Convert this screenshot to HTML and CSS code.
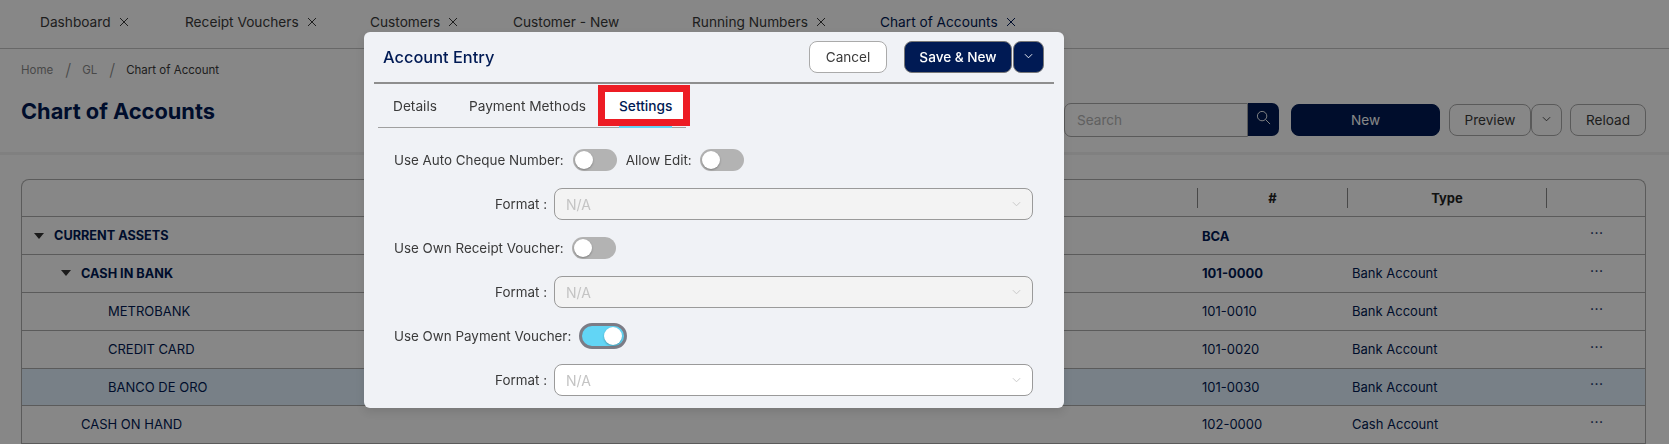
FILE: index.html
```html
<!DOCTYPE html>
<html lang="en">
<head>
    <meta charset="UTF-8">
    <meta name="viewport" content="width=device-width, initial-scale=1.0">
    <title>Chart of Accounts</title>
    <link rel="stylesheet" href="styles.css">
</head>
<body>
    <!-- Open tabs -->
    <nav class="topbar">
        <div class="page-tab tab-dashboard">Dashboard <svg class="close-icon" viewBox="0 0 10 10"><path d="M1 1l8 8M9 1l-8 8"/></svg></div>
        <div class="page-tab tab-receipts">Receipt Vouchers <svg class="close-icon" viewBox="0 0 10 10"><path d="M1 1l8 8M9 1l-8 8"/></svg></div>
        <div class="page-tab tab-customers">Customers <svg class="close-icon" viewBox="0 0 10 10"><path d="M1 1l8 8M9 1l-8 8"/></svg></div>
        <div class="page-tab tab-new">Customer - New</div>
        <div class="page-tab tab-numbers">Running Numbers <svg class="close-icon" viewBox="0 0 10 10"><path d="M1 1l8 8M9 1l-8 8"/></svg></div>
        <div class="page-tab tab-chart">Chart of Accounts <svg class="close-icon" viewBox="0 0 10 10"><path d="M1 1l8 8M9 1l-8 8"/></svg></div>
    </nav>

    <div class="crumbs">
        <span class="crumb-muted">Home</span>
        <span class="crumb-sep">/</span>
        <span class="crumb-muted">GL</span>
        <span class="crumb-sep">/</span>
        <span>Chart of Account</span>
    </div>

    <header class="page-head">
        <h1>Chart of Accounts</h1>
        <div class="actions">
            <div class="search">
                <input type="text" placeholder="Search">
                <button class="search-btn">
                    <svg viewBox="0 0 16 16"><circle cx="6.5" cy="6.5" r="5"/><path d="M10.2 10.2L15 15"/></svg>
                </button>
            </div>
            <button class="btn btn-new">New</button>
            <button class="btn btn-preview">Preview</button>
            <button class="btn btn-more">
                <svg class="chevron" viewBox="0 0 10 6"><path d="M1 1l4 4 4-4"/></svg>
            </button>
            <button class="btn btn-reload">Reload</button>
        </div>
    </header>

    <!-- Accounts list -->
    <section class="grid">
        <div class="row row-head">
            <div class="cell-name"></div>
            <div class="cell-code">#</div>
            <div class="cell-type">Type</div>
            <div class="cell-menu"></div>
        </div>
        <div class="row row-bold row-first">
            <div class="cell-name"><span class="caret"></span>CURRENT ASSETS</div>
            <div class="cell-code">BCA</div>
            <div class="cell-type"></div>
            <div class="cell-menu">···</div>
        </div>
        <div class="row row-bold">
            <div class="cell-name indent-1"><span class="caret"></span>CASH IN BANK</div>
            <div class="cell-code">101-0000</div>
            <div class="cell-type">Bank Account</div>
            <div class="cell-menu">···</div>
        </div>
        <div class="row">
            <div class="cell-name indent-2">METROBANK</div>
            <div class="cell-code">101-0010</div>
            <div class="cell-type">Bank Account</div>
            <div class="cell-menu">···</div>
        </div>
        <div class="row">
            <div class="cell-name indent-2">CREDIT CARD</div>
            <div class="cell-code">101-0020</div>
            <div class="cell-type">Bank Account</div>
            <div class="cell-menu">···</div>
        </div>
        <div class="row row-selected">
            <div class="cell-name indent-2">BANCO DE ORO</div>
            <div class="cell-code">101-0030</div>
            <div class="cell-type">Bank Account</div>
            <div class="cell-menu">···</div>
        </div>
        <div class="row">
            <div class="cell-name indent-3">CASH ON HAND</div>
            <div class="cell-code">102-0000</div>
            <div class="cell-type">Cash Account</div>
            <div class="cell-menu">···</div>
        </div>
    </section>

    <div class="backdrop"></div>

    <!-- Account Entry dialog -->
    <div class="modal">
        <div class="modal-head">
            <h2>Account Entry</h2>
            <button class="btn btn-cancel">Cancel</button>
            <button class="btn btn-save">Save &amp; New</button>
            <button class="btn btn-save-more">
                <svg class="chevron" viewBox="0 0 10 6"><path d="M1 1l4 4 4-4"/></svg>
            </button>
        </div>

        <div class="modal-tabs">
            <div class="modal-tab tab-details">Details</div>
            <div class="modal-tab tab-methods">Payment Methods</div>
            <div class="modal-tab tab-settings">Settings</div>
        </div>

        <form class="settings-form">
            <div class="switch-row">
                <label>Use Auto Cheque Number:</label>
                <span class="switch switch-first"></span>
                <label>Allow Edit:</label>
                <span class="switch"></span>
            </div>
            <div class="format-row">
                <label>Format :</label>
                <div class="select select-disabled">N/A <svg class="chevron" viewBox="0 0 10 6"><path d="M1 1l4 4 4-4"/></svg></div>
            </div>
            <div class="switch-row">
                <label>Use Own Receipt Voucher:</label>
                <span class="switch"></span>
            </div>
            <div class="format-row">
                <label>Format :</label>
                <div class="select select-disabled">N/A <svg class="chevron" viewBox="0 0 10 6"><path d="M1 1l4 4 4-4"/></svg></div>
            </div>
            <div class="switch-row switch-row-on">
                <label>Use Own Payment Voucher:</label>
                <span class="switch switch-on"></span>
            </div>
            <div class="format-row">
                <label>Format :</label>
                <div class="select">N/A <svg class="chevron" viewBox="0 0 10 6"><path d="M1 1l4 4 4-4"/></svg></div>
            </div>
        </form>
    </div>
</body>
</html>
```

FILE: styles.css
```css
* {
    box-sizing: border-box;
}
html, body {
    height: 444px;
    overflow: hidden;
}
body {
    font-family: Inter, "Noto Sans", sans-serif;
    font-size: 13px;
    color: #3a3a3a;
    background-color: white;
    margin: 0;
    padding: 0;
}
button {
    font-family: inherit;
    font-size: 13.6px;
}
svg {
    fill: none;
    stroke: currentColor;
}

/* top tabs */
.topbar {
    display: flex;
    height: 49px;
    padding: 0 0 4px 40px;
    border-bottom: 1px solid #c4c4c4;
    align-items: center;
}
.page-tab {
    display: flex;
    align-items: center;
    font-size: 13.7px;
    white-space: nowrap;
}
.tab-dashboard { width: 145px; }
.tab-receipts { width: 185px; }
.tab-customers { width: 143px; }
.tab-new { width: 179px; }
.tab-numbers { width: 188px; }
.tab-chart { color: #001a54; }
.close-icon {
    width: 10px;
    height: 10px;
    margin-left: 8px;
    stroke-width: 1;
}

/* breadcrumb */
.crumbs {
    display: flex;
    height: 49px;
    padding: 12px 0 0 21px;
    font-size: 11.5px;
    line-height: 18px;
}
.crumb-muted {
    color: #8a8a8a;
}
.crumb-sep {
    margin: 0 11px 0 12px;
    font-size: 17px;
    font-weight: 300;
    color: #8a8a8a;
}

/* page heading */
.page-head {
    display: flex;
    justify-content: space-between;
    height: 57px;
    padding: 0 23px 0 21px;
    border-bottom: 3px solid #f2f2f2;
}
h1 {
    margin: 0;
    font-size: 21.8px;
    line-height: 26px;
    font-weight: 700;
    color: #001a54;
}
.actions {
    display: flex;
    margin-top: 5px;
    height: 34px;
}
.search {
    display: flex;
    margin-right: 12px;
}
.search input {
    width: 184px;
    height: 34px;
    padding: 0 12px;
    font-family: inherit;
    font-size: 13.6px;
    border: 1px solid #aaa;
    border-radius: 7px 0 0 7px;
    background-color: white;
}
.search input::placeholder {
    color: #b5b5b5;
}
.search-btn {
    display: flex;
    align-items: center;
    justify-content: center;
    width: 31px;
    height: 33px;
    padding: 0 0 4px;
    color: white;
    background-color: #001a54;
    border: none;
    border-radius: 0 7px 7px 0;
}
.search-btn svg {
    width: 15px;
    height: 15px;
    stroke-width: 1;
}
.btn {
    display: flex;
    align-items: center;
    justify-content: center;
    height: 32px;
    padding: 0;
    margin-top: 1px;
    color: #3a3a3a;
    background-color: white;
    border: 1px solid #aaa;
    border-radius: 8px;
}
.chevron {
    width: 9px;
    height: 6px;
    stroke-width: 1;
}
.btn .chevron {
    margin-bottom: 3px;
}
.btn-new {
    width: 149px;
    margin-right: 9px;
    color: white;
    background-color: #001a54;
    border-color: #001a54;
}
.btn-preview { width: 82px; }
.btn-more { width: 31px; }
.btn-reload {
    width: 76px;
    margin-left: 8px;
}

/* accounts list */
.grid {
    margin: 24px 23px 0 21px;
    border: 1px solid #adadad;
    border-bottom: none;
    border-radius: 8px 8px 0 0;
    color: #001a54;
}
.row {
    display: flex;
    align-items: center;
    height: 38px;
    padding-bottom: 1px;
    border-bottom: 1px solid #adadad;
}
.row-first {
    padding-bottom: 0;
}
.row-head {
    height: 37px;
    padding-bottom: 0;
    font-weight: 700;
    color: #222;
}
.row-head .cell-code,
.row-head .cell-type {
    padding: 0;
    text-align: center;
    height: 20px;
    line-height: 20px;
    border-left: 1px solid #888;
}
.row-head .cell-menu {
    height: 20px;
    border-left: 1px solid #888;
}
.row-bold {
    font-weight: 700;
}
.row-bold .cell-type {
    font-weight: 400;
}
.row-selected {
    height: 37px;
    background-color: #e2f2ff;
}
.cell-name {
    flex: 1;
    display: flex;
    align-items: center;
    padding-left: 12px;
}
.indent-1 { padding-left: 39px; }
.indent-2 { padding-left: 86px; }
.indent-3 { padding-left: 59px; }
.row-bold .cell-name {
    font-size: 12.7px;
}
.cell-code {
    width: 150px;
    padding-left: 5px;
}
.cell-type {
    width: 199px;
    padding-left: 5px;
}
.cell-menu {
    width: 99px;
    padding: 0 0 6px 44px;
    font-size: 14px;
    font-weight: 400;
    letter-spacing: 0.5px;
}
.caret {
    width: 0;
    height: 0;
    margin-right: 10px;
    border-left: 5px solid transparent;
    border-right: 5px solid transparent;
    border-top: 6px solid #333;
}

.backdrop {
    position: fixed;
    top: 0;
    right: 0;
    bottom: 0;
    left: 0;
    background-color: rgba(0, 0, 0, 0.47);
}

/* dialog */
.modal {
    position: absolute;
    top: 32px;
    left: 364px;
    width: 700px;
    height: 376px;
    padding: 0 10px;
    background-color: #f0f2f6;
    border-radius: 6px;
    box-shadow: 0px 4px 8px rgba(0, 0, 0, 0.1);
}
.modal-head {
    display: flex;
    align-items: center;
    height: 52px;
    padding: 0 10px 0 9px;
    border-bottom: 2px solid #8e8e8e;
}
.modal-head .btn {
    margin-top: 0;
}
h2 {
    flex: 1;
    margin: 0;
    font-size: 16.4px;
    font-weight: 500;
    color: #001a54;
}
.btn-cancel {
    width: 78px;
    margin-right: 17px;
}
.btn-save,
.btn-save-more {
    color: white;
    font-weight: 500;
    background-color: #001a54;
    border-color: #777;
}
.btn-save {
    width: 108px;
    margin-right: 1px;
}
.btn-save-more {
    width: 31px;
}
.modal-tabs {
    display: flex;
    align-items: center;
    height: 44px;
    margin: 0 368px 0 4px;
    border-bottom: 1px solid #a0a0a0;
    font-size: 13.7px;
}
.modal-tab {
    color: #3a3a3a;
}
.tab-details { margin-left: 15px; }
.tab-methods { margin-left: 32px; }
.tab-settings {
    position: relative;
    isolation: isolate;
    margin-left: 33px;
    color: #001a54;
    font-weight: 500;
}
/* red annotation box round the active tab */
.tab-settings::before {
    content: "";
    position: absolute;
    top: -13px;
    left: -21px;
    right: -18px;
    bottom: -12px;
    border: 7px solid #ed1c24;
    background-color: white;
    z-index: -1;
}
.tab-settings::after {
    content: "";
    position: absolute;
    left: 0;
    right: 0;
    bottom: -14px;
    height: 2px;
    background-color: #62d5f5;
}
.settings-form {
    display: flex;
    flex-direction: column;
    gap: 17px;
    padding: 21px 20px 0;
    font-size: 13.4px;
}
.switch-row {
    display: flex;
    align-items: center;
    gap: 8px;
    height: 22px;
}
.switch-first {
    margin: 0 1px;
}
.switch-row-on {
    height: 26px;
    margin: -2px 0;
}
.switch {
    position: relative;
    width: 44px;
    height: 22px;
    background-color: #b3b3b3;
    border-radius: 11px;
}
.switch::after {
    content: "";
    position: absolute;
    top: 2px;
    left: 2px;
    width: 18px;
    height: 18px;
    background-color: white;
    border-radius: 50%;
    box-shadow: 0 1px 2px rgba(0, 0, 0, 0.3);
}
.switch-on {
    width: 48px;
    height: 26px;
    background-color: #62d5f5;
    border: 3px solid #7c7c86;
    border-radius: 13px;
}
.switch-on::after {
    left: auto;
    right: 2px;
    top: 1px;
}
.format-row {
    display: flex;
    align-items: center;
    gap: 7px;
}
.format-row label {
    width: 153px;
    text-align: right;
}
.select {
    display: flex;
    align-items: center;
    justify-content: space-between;
    width: 479px;
    height: 32px;
    padding: 0 11px 0 11px;
    font-size: 14px;
    color: #c4c4c4;
    background-color: white;
    border: 1px solid #9a9a9a;
    border-radius: 8px;
}
.select-disabled {
    background-color: #f3f3f3;
}
```
